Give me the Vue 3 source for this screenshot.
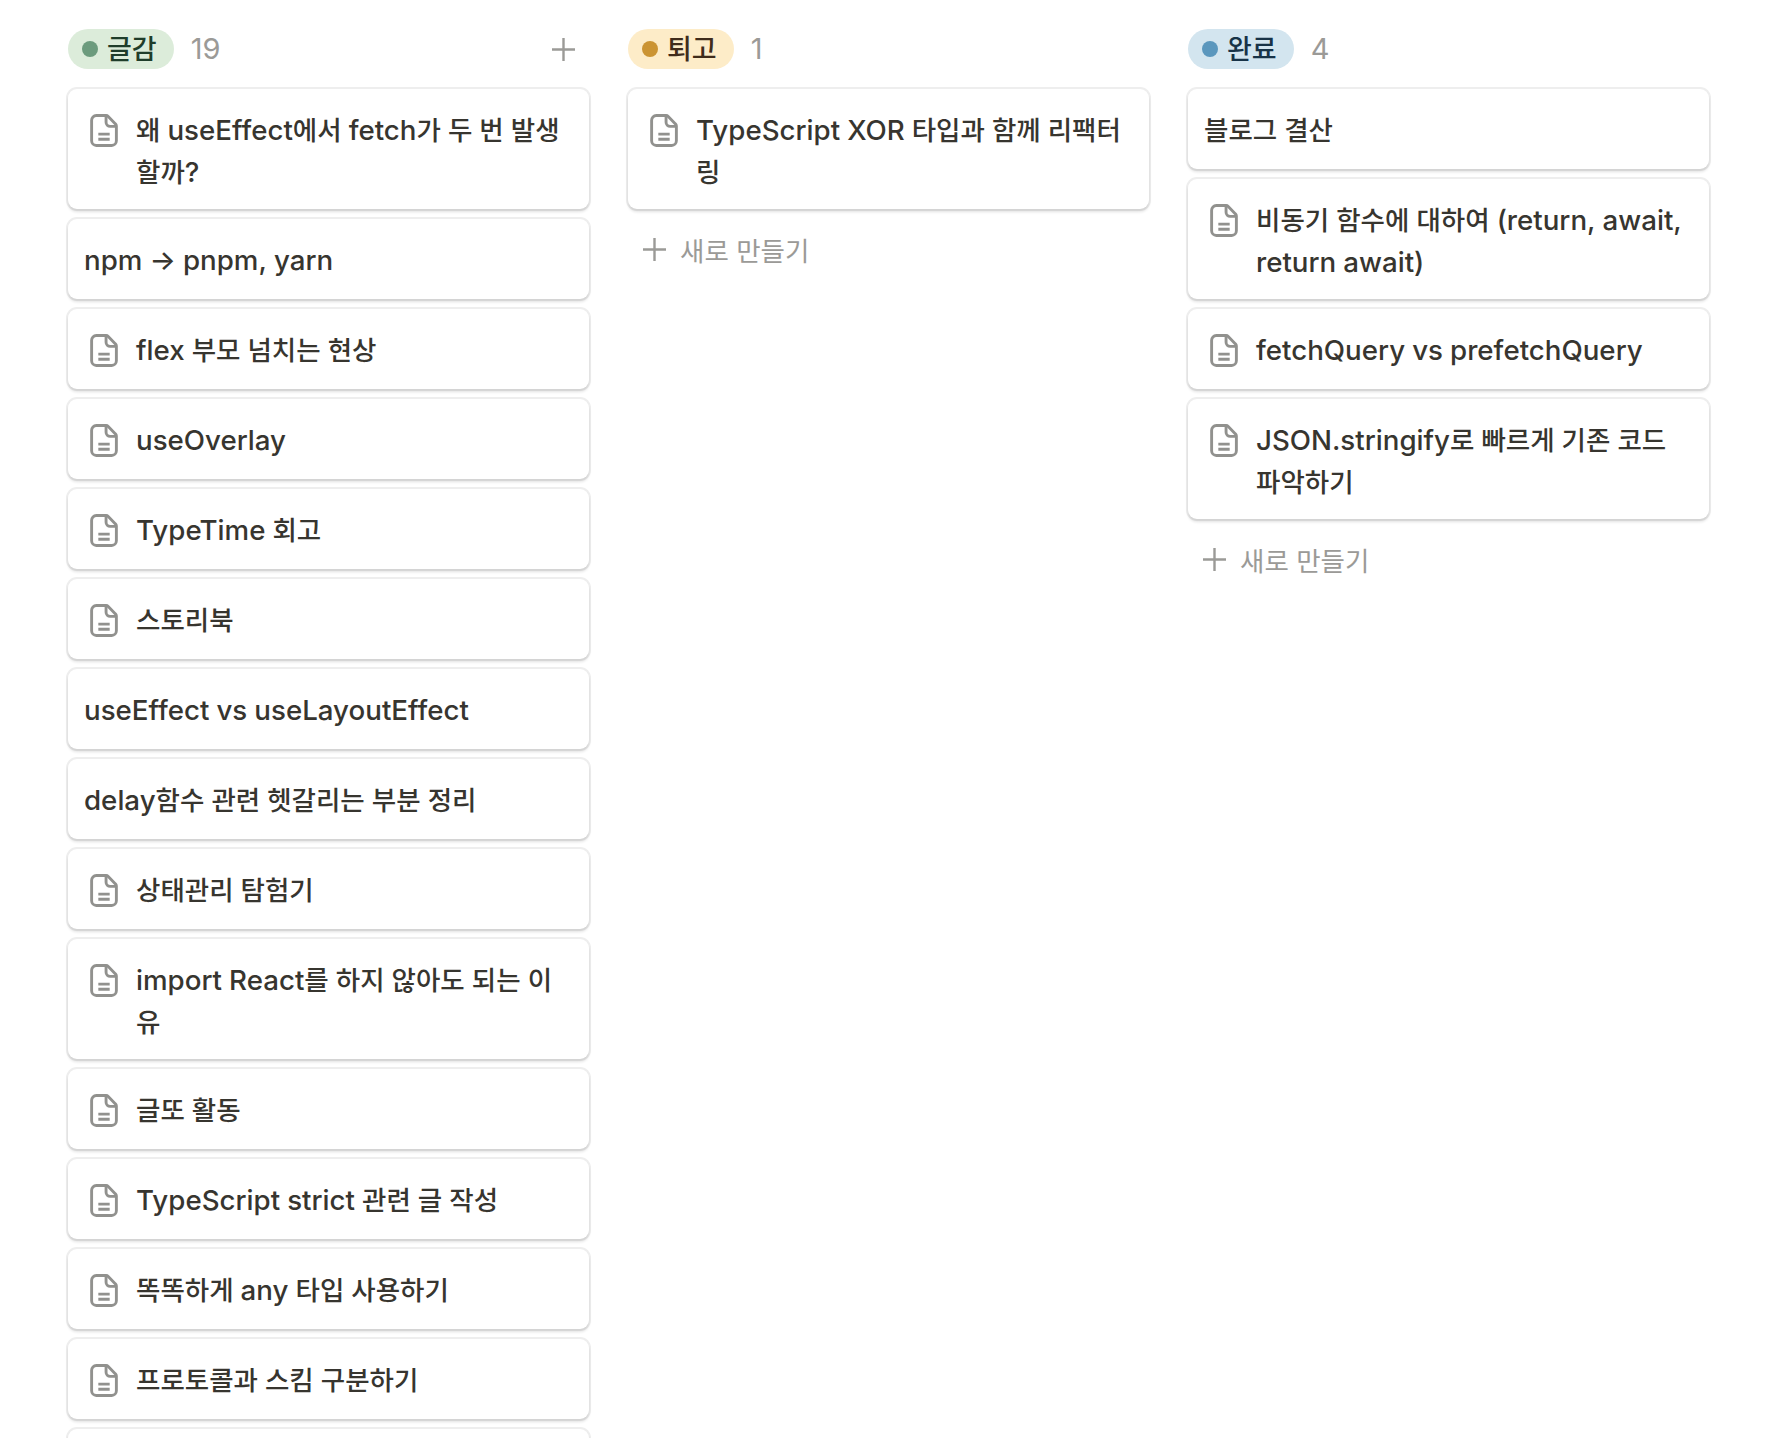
<script setup>
const columns = [
  {
    name: "글감",
    tone: "green",
    count: 19,
    addIcon: true,
    cards: [
      { title: "왜 useEffect에서 fetch가 두 번 발생할까?", doc: true },
      { title: "npm → pnpm, yarn" },
      { title: "flex 부모 넘치는 현상", doc: true },
      { title: "useOverlay", doc: true },
      { title: "TypeTime 회고", doc: true },
      { title: "스토리북", doc: true },
      { title: "useEffect vs useLayoutEffect" },
      { title: "delay함수 관련 헷갈리는 부분 정리" },
      { title: "상태관리 탐험기", doc: true },
      { title: "import React를 하지 않아도 되는 이유", doc: true },
      { title: "글또 활동", doc: true },
      { title: "TypeScript strict 관련 글 작성", doc: true },
      { title: "똑똑하게 any 타입 사용하기", doc: true },
      { title: "프로토콜과 스킴 구분하기", doc: true },
      { title: "" },
    ],
  },
  {
    name: "퇴고",
    tone: "yellow",
    count: 1,
    addRow: true,
    cards: [{ title: "TypeScript XOR 타입과 함께 리팩터링", doc: true }],
  },
  {
    name: "완료",
    tone: "blue",
    count: 4,
    addRow: true,
    cards: [
      { title: "블로그 결산" },
      { title: "비동기 함수에 대하여 (return, await, return await)", doc: true },
      { title: "fetchQuery vs prefetchQuery", doc: true },
      { title: "JSON.stringify로 빠르게 기존 코드 파악하기", doc: true },
    ],
  },
];

// latin words are set a little larger than the hangul around them
function parts(title) {
  return title.split(/([^\uac00-\ud7a3\s]+)/);
}
function isLatin(part) {
  return /[^\uac00-\ud7a3\s]/.test(part);
}
</script>

<template>
  <main class="board">
    <section class="column" v-for="col in columns" :key="col.name">
      <header class="column-head">
        <span class="pill" :class="col.tone">
          <i class="dot"></i>{{ col.name }}
        </span>
        <span class="count">{{ col.count }}</span>
        <svg v-if="col.addIcon" class="plus head-plus" viewBox="0 0 25 25">
          <path d="M12.5 1v23M1 12.500h23" />
        </svg>
      </header>

      <div class="cards">
        <article class="card" v-for="(card, i) in col.cards" :key="i">
          <svg v-if="card.doc" class="doc" viewBox="0 0 27 32">
            <path d="M6 1.500h9.500a3 3 0 0 1 2.100.9l7 7.200a3 3 0 0 1 .9 2.100V26a4.500 4.500 0 0 1-4.500 4.500H6A4.500 4.500 0 0 1 1.500 26V6A4.500 4.500 0 0 1 6 1.500z" />
            <path d="M15.500 2v6a4 4 0 0 0 4 4H25M8 19.500h11M8 24.500h11" />
          </svg>
          <span class="title">
            <template v-for="(part, j) in parts(card.title)" :key="j">
              <span v-if="isLatin(part)" class="latin">{{ part }}</span>
              <template v-else>{{ part }}</template>
            </template>
          </span>
        </article>
      </div>

      <div v-if="col.addRow" class="new-row">
        <svg class="plus" viewBox="0 0 25 25">
          <path d="M12.5 1v23M1 12.500h23" />
        </svg>
        새로 만들기
      </div>
    </section>
  </main>
</template>

<style>
html,
body {
  margin: 0;
  background: #fff;
  overflow: hidden;
}
</style>

<style scoped>
.board {
  height: 1438px;
  overflow: hidden;
  box-sizing: border-box;
  padding: 29px 59px 0 68px;
  display: grid;
  grid-template-columns: repeat(3, 521px);
  column-gap: 39px;
  font-family: Inter, "Noto Sans CJK KR", sans-serif;
  color: #37352f;
}

.column-head {
  display: flex;
  align-items: center;
  height: 40px;
  margin-bottom: 20px;
}

.pill {
  display: flex;
  align-items: center;
  height: 40px;
  padding: 0 17px 0 14px;
  border-radius: 20px;
  font-size: 27px;
  font-weight: 500;
  line-height: 37px;
}

.dot {
  width: 16px;
  height: 16px;
  border-radius: 50%;
  margin-right: 9px;
}

.green {
  background: #dcecda;
  color: #1f3d2a;
}
.green .dot {
  background: #6c9b7d;
}
.yellow {
  background: #fdecc8;
  color: #402c1b;
}
.yellow .dot {
  background: #cb9433;
}
.blue {
  background: #d3e5ef;
  color: #183347;
}
.blue .dot {
  background: #5b97bd;
}

.count {
  margin: 0 0 2px 17px;
  font-size: 29px;
  color: #9b9a97;
}

.plus {
  width: 25px;
  height: 25px;
  flex: none;
  fill: none;
  stroke: #9b9a97;
  stroke-width: 2.4;
}

.head-plus {
  margin-left: auto;
  margin-right: 13px;
}

.cards {
  display: flex;
  flex-direction: column;
  gap: 10px;
}

.card {
  display: flex;
  align-items: flex-start;
  box-sizing: border-box;
  flex: none;
  min-height: 80px;
  padding: 20px 20px 16px 16px;
  background: #fff;
  border-radius: 9px;
  box-shadow: 0 0 0 2px rgba(15, 15, 15, 0.07), 0 3px 3px rgba(15, 15, 15, 0.12);
  font-size: 26.500px;
  font-weight: 500;
  line-height: 42px;
}

.latin {
  font-size: 27.700px;
  font-weight: 550;
}

.doc {
  width: 28px;
  height: 33px;
  flex: none;
  margin: 5px 18px 0 6px;
  fill: none;
  stroke: #91918e;
  stroke-width: 2.8;
}

.new-row {
  display: flex;
  align-items: center;
  gap: 13px;
  height: 40px;
  margin-top: 20px;
  padding-left: 14px;
  font-size: 26.500px;
  color: #9b9a97;
}
</style>
